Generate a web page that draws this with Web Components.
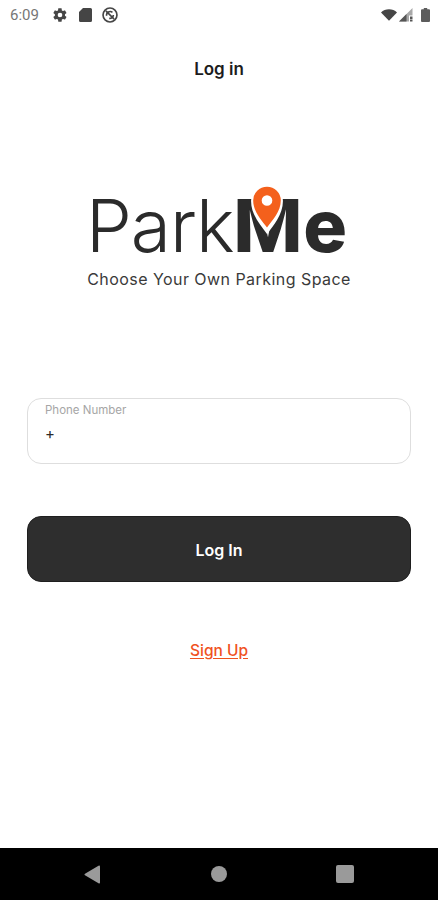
<!DOCTYPE html>
<html lang="en">
<head>
<meta charset="utf-8">
<title>ParkMe - Log in</title>
<style>
  html, body { margin: 0; padding: 0; background: #fff; }
  body { font-family: Inter, "Liberation Sans", sans-serif; }
</style>
</head>
<body>
<login-app></login-app>

<script>
const define = (name, html) => {
  const template = document.createElement('template')
  template.innerHTML = html
  customElements.define(name, class extends HTMLElement {
    constructor () {
      super()
      this.attachShadow({ mode: 'open' }).appendChild(template.content.cloneNode(true))
    }
  })
}

define('status-bar', `
  <style>
    :host { display: flex; align-items: center; height: 30px; padding: 0 8px 0 10px; box-sizing: border-box; }
    .time { font: 400 15px Roboto, sans-serif; color: #767676; width: 30px; }
    .left { display: flex; align-items: center; flex: 1; }
    .right { display: flex; align-items: center; }
    svg { display: block; }
    .gear { margin-left: 12px; }
    .card { margin-left: 11px; }
    .sync { margin-left: 9px; }
    .signal { margin-left: 2px; }
    .battery { margin-left: 8px; }
  </style>
  <div class="left">
    <span class="time">6:09</span>
    <svg class="gear" width="16" height="16" viewBox="0 0 24 24" fill="#454545"><path fill-rule="evenodd" d="M19.4 13c.1-.3.1-.7.1-1s0-.7-.1-1l2.1-1.6c.2-.2.2-.4.1-.6l-2-3.5c-.1-.2-.4-.3-.6-.2l-2.5 1c-.5-.4-1.1-.7-1.7-1l-.4-2.7c0-.2-.2-.4-.5-.4h-4c-.3 0-.5.2-.5.4l-.4 2.7c-.6.3-1.2.6-1.7 1l-2.5-1c-.2-.1-.5 0-.6.2l-2 3.5c-.1.2-.1.5.1.6L4.4 11c-.1.3-.1.7-.1 1s0 .7.1 1l-2.1 1.6c-.2.2-.2.4-.1.6l2 3.5c.1.2.4.3.6.2l2.5-1c.5.4 1.1.7 1.7 1l.4 2.7c0 .2.2.4.5.4h4c.3 0 .5-.2.5-.4l.4-2.700c.6-.3 1.2-.6 1.7-1l2.5 1c.2.1.5 0 .6-.2l2-3.5c.1-.2.1-.5-.1-.6zM12 15.500a3.500 3.500 0 1 1 0-7 3.500 3.500 0 0 1 0 7z"/></svg>
    <svg class="card" width="13" height="14" viewBox="0 0 13 14" fill="#454545"><path d="M4 0h7.500A1.500 1.500 0 0 1 13 1.500v11a1.500 1.500 0 0 1-1.500 1.500h-10A1.500 1.500 0 0 1 0 12.500V4z"/></svg>
    <svg class="sync" width="18" height="18" viewBox="0 0 24 24" fill="none" stroke="#454545" stroke-width="2.200"><circle cx="12" cy="12" r="9.300"/><path d="M6.500 6.500l11 11"/><path d="M7.500 13a4.800 4.800 0 0 1 7.800-4.500M11 16.500a4.800 4.800 0 0 0 5.500-4.500"/></svg>
  </div>
  <div class="right">
    <svg width="16" height="12" viewBox="0 0 16 12"><path d="M0 3.500C2 1.500 5 .3 8 .3s6 1.200 8 3.200L8 11.800z" fill="#454545"/></svg>
    <svg class="signal" width="14" height="14" viewBox="0 0 14 14"><path d="M0 13.500L13.500 0v7.500H10v6z" fill="#a8a8a8"/><path d="M0 13.500L7.500 6v7.500z" fill="#555"/><rect x="11" y="8.500" width="2.500" height="3" fill="#555"/><rect x="11" y="12" width="2.500" height="1.500" fill="#555"/></svg>
    <svg class="battery" width="9" height="14" viewBox="0 0 9 14" fill="#5c5c5c"><path d="M2.800 0h3.400v1.300H8a1 1 0 0 1 1 1V13a1 1 0 0 1-1 1H1a1 1 0 0 1-1-1V2.300a1 1 0 0 1 1-1h1.800z"/></svg>
  </div>
`)

define('app-title', `
  <style>
    :host { display: block; text-align: center; font: 600 17px Inter, "Liberation Sans", sans-serif; color: #1c1c1c; line-height: 20px; }
  </style>
  <slot></slot>
`)

define('park-logo', `
  <style>
    :host { display: block; text-align: center; color: #2b2b2b; }
    .mark { position: relative; width: 262px; margin: 0 auto; height: 72px; display: flex; align-items: flex-end; justify-content: flex-start; white-space: nowrap; font-family: Inter, "Liberation Sans", sans-serif; font-size: 73px; line-height: 72px; }
    .park { font-weight: 350; margin-left: -2px; letter-spacing: -1px; }
    .me { font-weight: 800; letter-spacing: 1px; }
    .pin { position: absolute; left: 162px; top: -6px; }
    .tag { margin-top: 7px; font: 400 16px/20px Inter, "Liberation Sans", sans-serif; letter-spacing: 0.45px; color: #3a3a3a; }
  </style>
  <div class="mark">
    <span class="park">Park</span><span class="me">Me</span>
    <svg class="pin" width="34" height="51" viewBox="0 0 32 48">
      <path d="M16 47C10 39 1 29 1 16a15 15 0 0 1 30 0c0 13-9 23-15 31z" fill="#fff"/>
      <path fill-rule="evenodd" d="M16 41C11 34 3 26 3 15.500a13 13 0 0 1 26 0C29 26 21 34 16 41zM16 20.500a5 5 0 1 0 0-10 5 5 0 0 0 0 10z" fill="#f4601c"/>
    </svg>
  </div>
  <div class="tag"><slot></slot></div>
`)

define('phone-field', `
  <style>
    :host { display: block; box-sizing: border-box; height: 66px; border: 1px solid #dedede; border-radius: 14px; padding: 4px 17px 0; background: #fff; }
    .label { font: 400 11.500px/14px Inter, "Liberation Sans", sans-serif; color: #a6a6a6; }
    .value { margin-top: 6px; font: 400 15px/22px Inter, "Liberation Sans", sans-serif; color: #2b2b2b; }
  </style>
  <div class="label">Phone Number</div>
  <div class="value"><slot></slot></div>
`)

define('primary-button', `
  <style>
    :host { display: flex; align-items: center; justify-content: center; box-sizing: border-box; height: 66px; padding-top: 1px; border-radius: 14px; border: 1px solid #1e1e1e; background: #2e2e2e; color: #fff; font: 600 16px Inter, "Liberation Sans", sans-serif; }
  </style>
  <slot></slot>
`)

define('text-link', `
  <style>
    :host { display: block; text-align: center; font: 500 15.500px/20px Inter, "Liberation Sans", sans-serif; color: #f0521e; text-decoration: underline; text-underline-offset: 2px; }
  </style>
  <slot></slot>
`)

define('nav-bar', `
  <style>
    :host { display: flex; align-items: center; justify-content: space-between; height: 52px; background: #000; padding: 0 84px; box-sizing: border-box; }
    svg { display: block; fill: #9a9a9a; }
  </style>
  <svg width="17" height="19" viewBox="0 0 17 19"><path d="M16 1.500v16a1 1 0 0 1-1.500.800L1 10.300a1 1 0 0 1 0-1.600L14.500.700A1 1 0 0 1 16 1.500z"/></svg>
  <svg width="16" height="16" viewBox="0 0 16 16"><circle cx="8" cy="8" r="8"/></svg>
  <svg width="18" height="18" viewBox="0 0 18 18"><rect width="18" height="18" rx="2"/></svg>
`)

define('login-app', `
  <style>
    :host { display: flex; flex-direction: column; height: 900px; background: #fff; }
    main { flex: 1; display: flex; flex-direction: column; padding: 0 27px; }
    app-title { margin-top: 29px; }
    park-logo { margin-top: 111px; }
    phone-field { margin-top: 109px; }
    primary-button { margin-top: 52px; }
    text-link { margin-top: 59px; }
  </style>
  <status-bar></status-bar>
  <main>
    <app-title>Log in</app-title>
    <park-logo>Choose Your Own Parking Space</park-logo>
    <phone-field>+</phone-field>
    <primary-button>Log In</primary-button>
    <text-link>Sign Up</text-link>
  </main>
  <nav-bar></nav-bar>
`)
</script>
</body>
</html>
